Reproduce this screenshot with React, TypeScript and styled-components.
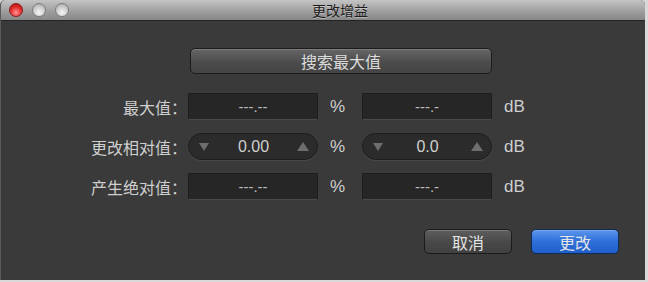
import React from "react";
import styled, { createGlobalStyle } from "styled-components";

const GlobalStyle = createGlobalStyle`
  html, body {
    margin: 0;
    padding: 0;
    background: #d9d9d9;
  }
  body {
    font-family: "Liberation Sans", "Noto Sans CJK SC", sans-serif;
  }
`;

const Window = styled.div`
  width: 645px;
  height: 280px;
  display: flex;
  flex-direction: column;
  background-color: #3a3a3a;
  border-radius: 5px 5px 0 0;
  overflow: hidden;
  box-sizing: border-box;
  border-left: 1px solid #5a5a5a;
`;

const TitleBar = styled.div`
  position: relative;
  height: 20px;
  flex: none;
  display: flex;
  align-items: center;
  justify-content: center;
  background: linear-gradient(#c4c4c4, #9c9c9c 60%, #888888);
  border-bottom: 1px solid #242424;
`;

const Lights = styled.div`
  position: absolute;
  left: 8px;
  top: 3px;
  display: flex;
  gap: 9px;
`;

const Light = styled.span<{ $red?: boolean }>`
  width: 14px;
  height: 14px;
  border-radius: 50%;
  box-sizing: border-box;
  border: 1px solid ${(p) => (p.$red ? "#8a1b1b" : "#7c7c7c")};
  background: ${(p) =>
    p.$red
      ? "radial-gradient(circle at 50% 72%, #ff9090, #e22828 55%, #a81212)"
      : "radial-gradient(circle at 50% 72%, #f6f6f6, #cbcbcb 55%, #9d9d9d)"};
`;

const Title = styled.div`
  font-family: "Noto Sans CJK SC", sans-serif;
  font-size: 14px;
  color: #1c1c1c;
  text-shadow: 0 1px 0 rgba(255, 255, 255, 0.35);
  margin-left: 34px;
`;

const Body = styled.div`
  flex: 1;
  display: flex;
  flex-direction: column;
  padding-top: 27px;
`;

const SearchButton = styled.div`
  align-self: flex-start;
  margin-left: 189px;
  width: 302px;
  height: 26px;
  box-sizing: border-box;
  display: flex;
  align-items: center;
  justify-content: center;
  border-radius: 5px;
  border: 1px solid #1c1c1c;
  background: linear-gradient(#666666, #4c4c4c 55%, #444444);
  box-shadow: inset 0 1px 0 rgba(255, 255, 255, 0.15);
  font-family: "Noto Sans CJK SC", sans-serif;
  font-size: 16px;
  color: #dcdcdc;
`;

const Form = styled.div`
  margin-top: 19px;
  display: grid;
  grid-template-columns: 187px 130px 44px 130px auto;
  grid-auto-rows: 27px;
  row-gap: 13px;
  align-items: center;
`;

const Label = styled.div`
  text-align: right;
  padding-right: 1px;
  font-family: "Noto Sans CJK SC", sans-serif;
  font-size: 16px;
  color: #cfcfcf;
`;

const Unit = styled.div`
  padding-left: 12px;
  font-family: "Liberation Sans", sans-serif;
  font-size: 17px;
  color: #cfcfcf;
`;

const Field = styled.div`
  height: 27px;
  box-sizing: border-box;
  display: flex;
  align-items: center;
  justify-content: center;
  background: #262626;
  border: 1px solid #1e1e1e;
  border-bottom-color: #4a4a4a;
  font-size: 15px;
  color: #bdbdbd;
`;

const Stepper = styled.div`
  height: 27px;
  box-sizing: border-box;
  display: flex;
  align-items: center;
  justify-content: space-between;
  padding: 0 8px 0 9px;
  border-radius: 14px;
  background: #2b2b2b;
  border: 1px solid #1d1d1d;
  box-shadow: 0 1px 0 rgba(255, 255, 255, 0.08);
  font-size: 16px;
  color: #cfcfcf;
`;

const Arrow = styled.svg`
  width: 12px;
  height: 9px;
  fill: #6e6e6e;
`;

const Footer = styled.div`
  margin-top: 29px;
  display: flex;
  justify-content: flex-end;
  gap: 19px;
  padding-right: 26px;
`;

const DialogButton = styled.div<{ $primary?: boolean }>`
  width: 88px;
  height: 25px;
  box-sizing: border-box;
  display: flex;
  align-items: center;
  justify-content: center;
  border-radius: 5px;
  border: 1px solid ${(p) => (p.$primary ? "#0f2a57" : "#1b1b1b")};
  background: ${(p) =>
    p.$primary
      ? "linear-gradient(#5c97ec, #2e6fd8 50%, #1f5fcb)"
      : "linear-gradient(#5e5e5e, #484848 55%, #414141)"};
  box-shadow: inset 0 1px 0 rgba(255, 255, 255, 0.18);
  font-family: "Noto Sans CJK SC", sans-serif;
  font-size: 16px;
  color: #e4e4e4;
`;

const Down = () => (
  <Arrow viewBox="0 0 12 9">
    <polygon points="1,1 11,1 6,9" />
  </Arrow>
);

const Up = () => (
  <Arrow viewBox="0 0 12 9">
    <polygon points="6,0 12,9 0,9" />
  </Arrow>
);

const App = () => {
  return (
    <>
      <GlobalStyle />
      <Window>
        <TitleBar>
          <Lights>
            <Light $red />
            <Light />
            <Light />
          </Lights>
          <Title>更改增益</Title>
        </TitleBar>
        <Body>
          <SearchButton>搜索最大值</SearchButton>
          <Form>
            <Label>最大值：</Label>
            <Field>---.--</Field>
            <Unit>%</Unit>
            <Field>---.-</Field>
            <Unit>dB</Unit>

            <Label>更改相对值：</Label>
            <Stepper>
              <Down />
              <span>0.00</span>
              <Up />
            </Stepper>
            <Unit>%</Unit>
            <Stepper>
              <Down />
              <span>0.0</span>
              <Up />
            </Stepper>
            <Unit>dB</Unit>

            <Label>产生绝对值：</Label>
            <Field>---.--</Field>
            <Unit>%</Unit>
            <Field>---.-</Field>
            <Unit>dB</Unit>
          </Form>
          <Footer>
            <DialogButton>取消</DialogButton>
            <DialogButton $primary>更改</DialogButton>
          </Footer>
        </Body>
      </Window>
    </>
  );
};

export default App;
